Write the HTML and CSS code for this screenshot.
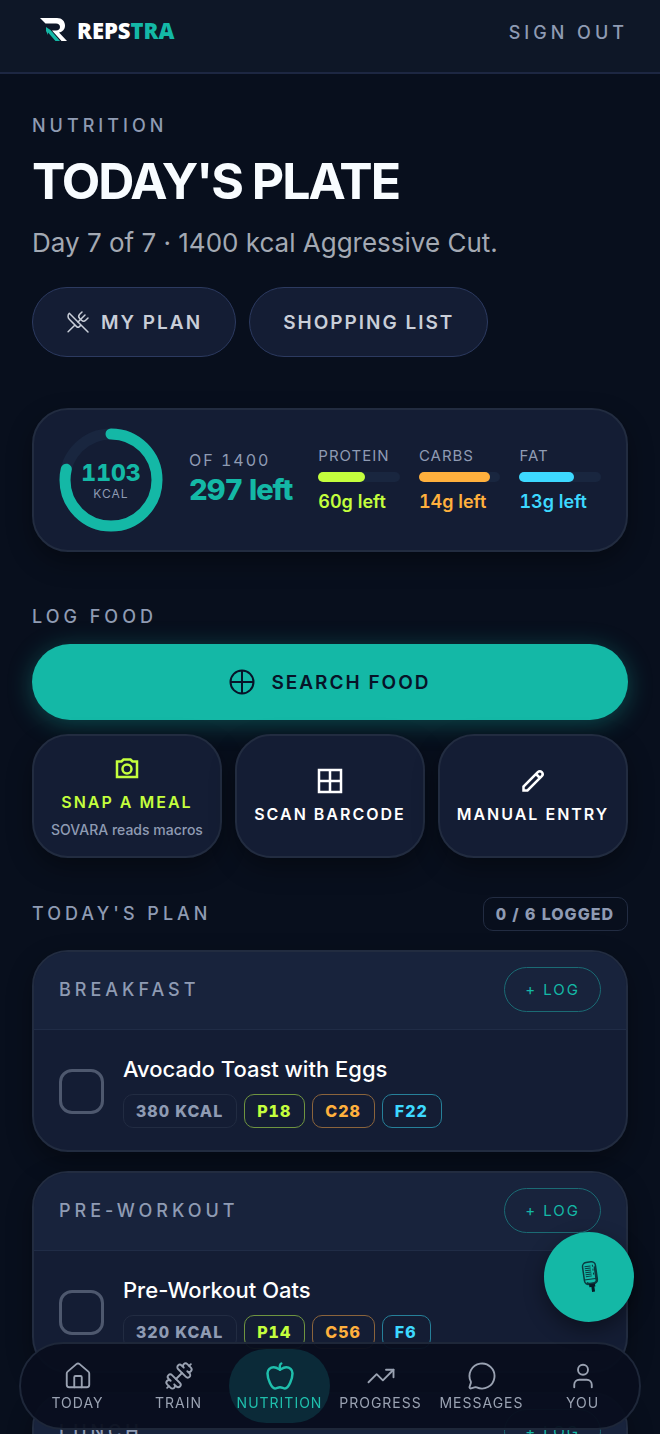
FILE: index.html
```
<!DOCTYPE html>
<html lang="en">
<head>
  <meta charset="UTF-8" />
  <meta name="viewport" content="width=device-width, initial-scale=1.0"/>
  <title>Repstra - Nutrition</title>
  <link rel="stylesheet" href="styles.css">
</head>
<body>
  <header class="topbar">
    <a href="#today" class="logo">
      <svg class="logo-mark" viewBox="0 0 28 24" aria-hidden="true">
        <path fill="#fff" d="M0 0H17C22 0 25 3.500 25 7.500C25 11.500 22.500 14 19 14.500L27 23H21.500L12 12.500H16C18.500 12.500 20 11 20 9C20 7 18.500 5.500 16 5.500H5.500Z"/>
        <path fill="#14b8a6" d="M6 9L10.500 12L20 23H15.500L8 14.500V17L6 13Z"/>
      </svg>
      <span>REPS<b>TRA</b></span>
    </a>
    <button type="button" class="sign-out">SIGN OUT</button>
  </header>

  <main>
    <section class="intro">
      <p class="eyebrow">NUTRITION</p>
      <h1>TODAY'S PLATE</h1>
      <p class="subtitle">Day 7 of 7 · 1400 kcal Aggressive Cut.</p>
      <div class="actions">
        <a href="#plan" class="pill">
          <svg class="icon icon-sm" viewBox="0 0 24 24" aria-hidden="true"><path d="m16 2-2.300 2.300a3 3 0 0 0 0 4.200l1.800 1.800a3 3 0 0 0 4.200 0L22 8"/><path d="M15 15 3.300 3.300a4.200 4.200 0 0 0 0 6l7.300 7.300c.7.7 2 .7 2.800 0L15 15Zm0 0 7 7"/><path d="m2.100 21.800 6.400-6.300"/><path d="m19 5-7 7"/></svg>
          MY PLAN
        </a>
        <a href="#shopping" class="pill">SHOPPING LIST</a>
      </div>
    </section>

    <section class="card summary">
      <div class="ring">
        <svg viewBox="0 0 104 104" aria-hidden="true">
          <circle class="ring-track" cx="52" cy="52" r="46"/>
          <circle class="ring-value" cx="52" cy="52" r="46" pathLength="100" stroke-dasharray="78.8 100"/>
        </svg>
        <div class="ring-text"><strong>1103</strong><span>KCAL</span></div>
      </div>
      <div class="remaining">
        <span>OF 1400</span>
        <strong>297 left</strong>
      </div>
      <div class="macros">
        <div class="macro protein">
          <span class="macro-name">PROTEIN</span>
          <div class="bar"><div class="bar-fill" style="width: 57%"></div></div>
          <strong>60g left</strong>
        </div>
        <div class="macro carbs">
          <span class="macro-name">CARBS</span>
          <div class="bar"><div class="bar-fill" style="width: 87%"></div></div>
          <strong>14g left</strong>
        </div>
        <div class="macro fat">
          <span class="macro-name">FAT</span>
          <div class="bar"><div class="bar-fill" style="width: 67%"></div></div>
          <strong>13g left</strong>
        </div>
      </div>
    </section>

    <section class="log-food">
      <h2 class="eyebrow">LOG FOOD</h2>
      <button type="button" class="search-btn">
        <svg class="icon" viewBox="0 0 26 26" aria-hidden="true"><circle cx="13" cy="13" r="11.500"/><path d="M13 1.500v23M1.500 13h23"/></svg>
        SEARCH FOOD
      </button>
      <div class="tiles">
        <button type="button" class="card tile snap">
          <svg class="icon" viewBox="0 0 26 26" aria-hidden="true"><path d="M3 5.500h4.500l2-2h7l2 2H23v15.500H3Z"/><circle cx="13" cy="13" r="4.500"/></svg>
          <span>SNAP A MEAL</span>
          <small>SOVARA reads macros</small>
        </button>
        <button type="button" class="card tile">
          <svg class="icon" viewBox="0 0 26 26" aria-hidden="true"><path d="M2 2h22v22H2ZM13 2v22M2 13h22"/></svg>
          <span>SCAN BARCODE</span>
        </button>
        <button type="button" class="card tile">
          <svg class="icon" viewBox="0 0 26 26" aria-hidden="true"><path d="M3.500 22.500v-4L17.800 4.200q2-2 4 0t0 4L7.500 22.500ZM16 6l4 4"/></svg>
          <span>MANUAL ENTRY</span>
        </button>
      </div>
    </section>

    <section class="plan">
      <div class="plan-head">
        <h2 class="eyebrow">TODAY'S PLAN</h2>
        <span class="chip">0 / 6 LOGGED</span>
      </div>

      <article class="card meal">
        <div class="meal-head">
          <h3 class="eyebrow">BREAKFAST</h3>
          <button type="button" class="log-btn">+ LOG</button>
        </div>
        <div class="meal-body">
          <input type="checkbox" id="breakfast">
          <div class="meal-info">
            <label for="breakfast">Avocado Toast with Eggs</label>
            <div class="chips">
              <span class="chip">380 KCAL</span>
              <span class="chip protein">P18</span>
              <span class="chip carbs">C28</span>
              <span class="chip fat">F22</span>
            </div>
          </div>
        </div>
      </article>

      <article class="card meal">
        <div class="meal-head">
          <h3 class="eyebrow">PRE-WORKOUT</h3>
          <button type="button" class="log-btn">+ LOG</button>
        </div>
        <div class="meal-body">
          <input type="checkbox" id="preworkout">
          <div class="meal-info">
            <label for="preworkout">Pre-Workout Oats</label>
            <div class="chips">
              <span class="chip">320 KCAL</span>
              <span class="chip protein">P14</span>
              <span class="chip carbs">C56</span>
              <span class="chip fat">F6</span>
            </div>
          </div>
        </div>
      </article>

      <article class="card meal">
        <div class="meal-head">
          <h3 class="eyebrow">LUNCH</h3>
          <button type="button" class="log-btn">+ LOG</button>
        </div>
      </article>
    </section>
  </main>

  <button type="button" class="mic-btn">
    <svg viewBox="-2 0 24 36" aria-hidden="true">
      <g transform="rotate(-8 12 18)" fill="none" stroke="#0b3b40">
        <rect x="5" y="3" width="13" height="22" rx="4" stroke-width="1.500"/>
        <path stroke-width="1" d="M7 7h6M7 9h6M7 11h6M7 13h6M7 15h6M7 17h6M15 6v2M15 10v2M15 14v2M5 20h13"/>
        <path stroke-width="2" d="M7 23c1 2 8 2 10 0V8"/>
        <path fill="#071a26" stroke="none" d="M9 25h6v3h-1v5h-3v-5H9Z"/>
      </g>
    </svg>
  </button>

  <nav class="tabbar">
    <a href="#today">
      <svg class="icon" viewBox="0 0 24 24" aria-hidden="true"><path d="M15 21v-8a1 1 0 0 0-1-1h-4a1 1 0 0 0-1 1v8"/><path d="M3 10a2 2 0 0 1 .7-1.500l7-6a2 2 0 0 1 2.600 0l7 6A2 2 0 0 1 21 10v9a2 2 0 0 1-2 2H5a2 2 0 0 1-2-2z"/></svg>
      TODAY
    </a>
    <a href="#train">
      <svg class="icon" viewBox="0 0 24 24" aria-hidden="true"><path d="M17.596 12.768a2 2 0 1 0 2.829-2.829l-1.768-1.767a2 2 0 0 0 2.828-2.829l-2.828-2.828a2 2 0 0 0-2.829 2.828l-1.767-1.768a2 2 0 1 0-2.829 2.829z"/><path d="m2.500 21.500 1.400-1.400M20.100 3.900l1.400-1.400M9.600 14.400l4.800-4.800"/><path d="M5.343 21.485a2 2 0 1 0 2.829-2.828l1.767 1.768a2 2 0 1 0 2.829-2.829l-6.364-6.364a2 2 0 1 0-2.829 2.829l1.768 1.767a2 2 0 0 0-2.828 2.829z"/></svg>
      TRAIN
    </a>
    <a href="#nutrition" class="active">
      <svg class="icon" viewBox="0 0 24 24" aria-hidden="true"><path d="M12 20.940c1.500 0 2.750 1.060 4 1.060 3 0 6-8 6-12.220A4.910 4.910 0 0 0 17 5c-2.220 0-4 1.440-5 2-1-.56-2.780-2-5-2a4.900 4.900 0 0 0-5 4.780C2 14 5 22 8 22c1.250 0 2.500-1.060 4-1.060Z"/><path d="M13 2c-1 .5-1.500 2-1 5"/></svg>
      NUTRITION
    </a>
    <a href="#progress">
      <svg class="icon" viewBox="0 0 24 24" aria-hidden="true"><path d="M16 7h6v6"/><path d="m22 7-8.500 8.500-5-5L2 17"/></svg>
      PROGRESS
    </a>
    <a href="#messages">
      <svg class="icon" viewBox="0 0 24 24" aria-hidden="true"><path d="M2.992 16.342a2 2 0 0 1 .094 1.167l-1.065 3.290a1 1 0 0 0 1.236 1.168l3.413-.998a2 2 0 0 1 1.099.092 10 10 0 1 0-4.777-4.719"/></svg>
      MESSAGES
    </a>
    <a href="#you">
      <svg class="icon" viewBox="0 0 24 24" aria-hidden="true"><path d="M19 21v-2a4 4 0 0 0-4-4H9a4 4 0 0 0-4 4v2"/><circle cx="12" cy="7" r="4"/></svg>
      YOU
    </a>
  </nav>
</body>
</html>
```
FILE: styles.css
```
:root {
  --bg: #080f1d;
  --card: #141d34;
  --card-head: #18233c;
  --line: #222c40;
  --teal: #14b8a6;
  --lime: #c4ff3d;
  --orange: #ffb03d;
  --cyan: #3dd9ff;
  --muted: #8f9bb3;
}

* {
  box-sizing: border-box;
}

html {
  scrollbar-width: none;
}

body {
  margin: 0;
  font-family: Inter, "Liberation Sans", sans-serif;
  font-optical-sizing: none;
  background-color: var(--bg);
  color: #fff;
}

h1, h2, h3, p {
  margin: 0;
}

a {
  color: inherit;
  text-decoration: none;
}

button {
  font-family: inherit;
  color: inherit;
  cursor: pointer;
}

.icon {
  width: 26px;
  height: 26px;
  fill: none;
  stroke: currentColor;
  stroke-width: 2.5;
}

.icon-sm {
  width: 24px;
  height: 24px;
  stroke-width: 1.5;
  stroke-linecap: round;
  stroke-linejoin: round;
}

/* top bar */
.topbar {
  position: sticky;
  top: 0;
  z-index: 2;
  display: flex;
  justify-content: space-between;
  align-items: flex-start;
  height: 74px;
  padding: 15px 32px 0 40px;
  background-color: #0e1727;
  border-bottom: 2px solid #1d2742;
}

.logo {
  display: flex;
  align-items: center;
  gap: 9px;
  font-family: "Open Sans", sans-serif;
  font-size: 22px;
  font-weight: 800;
  line-height: 30px;
}

.logo-mark {
  width: 28px;
  height: 24px;
}

.logo b {
  font-weight: 800;
  color: var(--teal);
}

.sign-out {
  padding: 0;
  border: 0;
  background: none;
  color: var(--muted);
  font-size: 18px;
  font-weight: 500;
  letter-spacing: 4px;
  line-height: 36px;
}

main {
  padding: 39px 32px 140px;
}

.eyebrow {
  color: var(--muted);
  font-size: 18px;
  font-weight: 500;
  letter-spacing: 4px;
  line-height: 26px;
}

h1 {
  margin-top: 12px;
  font-size: 50px;
  font-weight: 700;
  line-height: 60px;
  letter-spacing: -2px;
  color: #f8fcff;
}

.subtitle {
  margin-top: 14px;
  color: #a3a9b3;
  font-size: 26px;
  line-height: 36px;
}

.actions {
  display: flex;
  gap: 13px;
  margin-top: 26px;
}

.pill {
  display: flex;
  align-items: center;
  gap: 11px;
  height: 70px;
  padding: 0 33px;
  border: 1px solid #2c3a60;
  border-radius: 35px;
  background-color: var(--card);
  color: #c9ced8;
  font-size: 19px;
  font-weight: 600;
  letter-spacing: 2px;
}

.card {
  background-color: var(--card);
  border: 2px solid var(--line);
  border-radius: 36px;
  box-shadow: 0 10px 24px rgba(0, 0, 0, 0.35);
}

/* calories and macros */
.summary {
  display: flex;
  align-items: center;
  gap: 26px;
  margin-top: 51px;
  padding: 18px 25px;
  font-variant-numeric: tabular-nums;
}

.ring {
  display: grid;
  width: 104px;
  height: 104px;
}

.ring svg,
.ring-text {
  grid-area: 1 / 1;
}

.ring circle {
  fill: none;
  stroke-width: 11;
}

.ring .ring-track {
  stroke: #19263f;
}

.ring .ring-value {
  stroke: var(--teal);
  stroke-linecap: round;
  transform: rotate(-90deg);
  transform-origin: center;
}

.ring-text {
  display: flex;
  flex-direction: column;
  align-items: center;
  justify-content: center;
  color: var(--muted);
  font-size: 12px;
  line-height: 14px;
  letter-spacing: 1px;
}

.ring-text strong {
  color: var(--teal);
  font-size: 23px;
  font-weight: 800;
  line-height: 28px;
  letter-spacing: 0;
}

.remaining {
  display: flex;
  flex-direction: column;
  padding-bottom: 4px;
  color: var(--muted);
  font-size: 16px;
  line-height: 24px;
  letter-spacing: 2px;
  white-space: nowrap;
}

.remaining strong {
  color: var(--teal);
  font-size: 29px;
  font-weight: 800;
  line-height: 36px;
  letter-spacing: -1px;
}

.macros {
  flex: 1;
  display: grid;
  grid-template-columns: repeat(3, 1fr);
  gap: 19px;
}

.macro {
  white-space: nowrap;
  font-size: 18px;
  line-height: 24px;
}

.macro strong {
  font-weight: 600;
}

.macro-name {
  display: block;
  color: var(--muted);
  font-size: 15px;
  line-height: 20px;
  letter-spacing: 1px;
}

.bar {
  height: 10px;
  margin: 6px 0 8px;
  border-radius: 5px;
  background-color: #19263f;
}

.bar-fill {
  height: 100%;
  border-radius: 5px;
  background-color: currentColor;
}

.protein {
  color: var(--lime);
}

.carbs {
  color: var(--orange);
}

.fat {
  color: var(--cyan);
}

/* log food */
.log-food {
  margin-top: 52px;
}

.search-btn {
  display: flex;
  align-items: center;
  justify-content: center;
  gap: 16px;
  width: 100%;
  height: 76px;
  margin: 14px 0;
  border: 0;
  border-radius: 38px;
  background-color: var(--teal);
  box-shadow: 0 4px 24px rgba(20, 184, 166, 0.35);
  color: #071328;
  font-size: 19px;
  font-weight: 600;
  letter-spacing: 2px;
}

.search-btn .icon {
  stroke-width: 2;
}

.tiles {
  display: grid;
  grid-template-columns: repeat(3, 1fr);
  gap: 13px;
}

.tile {
  display: flex;
  flex-direction: column;
  align-items: center;
  justify-content: center;
  gap: 8px;
  min-height: 124px;
  padding: 17px 0 15px;
  color: #fff;
  font-size: 16px;
  font-weight: 600;
  line-height: 24px;
  letter-spacing: 2px;
  white-space: nowrap;
}

.tile small {
  color: var(--muted);
  font-size: 14px;
  font-weight: 500;
  line-height: 16px;
  letter-spacing: 0;
}

.snap {
  color: var(--lime);
}

/* today's plan */
.plan {
  display: flex;
  flex-direction: column;
  gap: 19px;
  margin-top: 39px;
}

.plan-head {
  display: flex;
  justify-content: space-between;
  align-items: center;
}

.chip {
  padding: 0 13px 0 12px;
  border: 1px solid #222c42;
  border-radius: 10px;
  color: var(--muted);
  font-size: 16px;
  font-weight: 800;
  font-variant-numeric: tabular-nums;
  line-height: 32px;
  letter-spacing: 1px;
}

.meal {
  overflow: hidden;
}

.meal-head {
  display: flex;
  justify-content: space-between;
  align-items: center;
  padding: 15px 25px 17px;
  background-color: var(--card-head);
  border-bottom: 1px solid #202c46;
}

.log-btn {
  height: 45px;
  padding: 0 20px;
  border: 1px solid #1b6b74;
  border-radius: 23px;
  background: none;
  color: var(--teal);
  font-size: 15px;
  letter-spacing: 2px;
}

.meal-body {
  display: flex;
  align-items: center;
  gap: 19px;
  padding: 24px 25px 22px;
}

.meal-body input {
  appearance: none;
  width: 45px;
  height: 45px;
  margin: 0;
  border: 3px solid #4e586e;
  border-radius: 13px;
}

.meal-info label {
  display: block;
  margin-bottom: 10px;
  font-size: 22px;
  font-weight: 500;
  line-height: 30px;
}

.chips {
  display: flex;
  gap: 7px;
}

.chips .protein {
  border-color: #6f9440;
  color: var(--lime);
}

.chips .carbs {
  border-color: #8a643c;
  color: var(--orange);
}

.chips .fat {
  border-color: #268099;
  color: var(--cyan);
}

/* voice button */
.mic-btn {
  position: fixed;
  right: 26px;
  bottom: 112px;
  z-index: 3;
  display: flex;
  align-items: center;
  justify-content: center;
  width: 90px;
  height: 90px;
  padding: 0;
  border: 0;
  border-radius: 50%;
  background-color: var(--teal);
  box-shadow: 0 8px 20px rgba(0, 0, 0, 0.4);
}

.mic-btn svg {
  width: 24px;
  height: 36px;
}

/* bottom tabs */
.tabbar {
  position: fixed;
  right: 19px;
  bottom: 4px;
  left: 19px;
  z-index: 2;
  display: grid;
  grid-template-columns: repeat(6, 1fr);
  padding: 5px 6px;
  border: 2px solid #1e2739;
  border-radius: 44px;
  background-color: rgba(8, 14, 29, 0.95);
  color: #9aa2b2;
}

.tabbar a {
  display: flex;
  flex-direction: column;
  align-items: center;
  gap: 2px;
  padding: 12px 0 10px;
  border-radius: 37px;
  font-size: 14px;
  line-height: 20px;
  letter-spacing: 1px;
}

.tabbar .icon {
  width: 30px;
  height: 30px;
  stroke-width: 1.5;
  stroke-linecap: round;
  stroke-linejoin: round;
}

.tabbar .active {
  background-color: #0b2a38;
  color: #1fbfac;
}

.tabbar .active .icon {
  stroke-width: 2;
}
```
